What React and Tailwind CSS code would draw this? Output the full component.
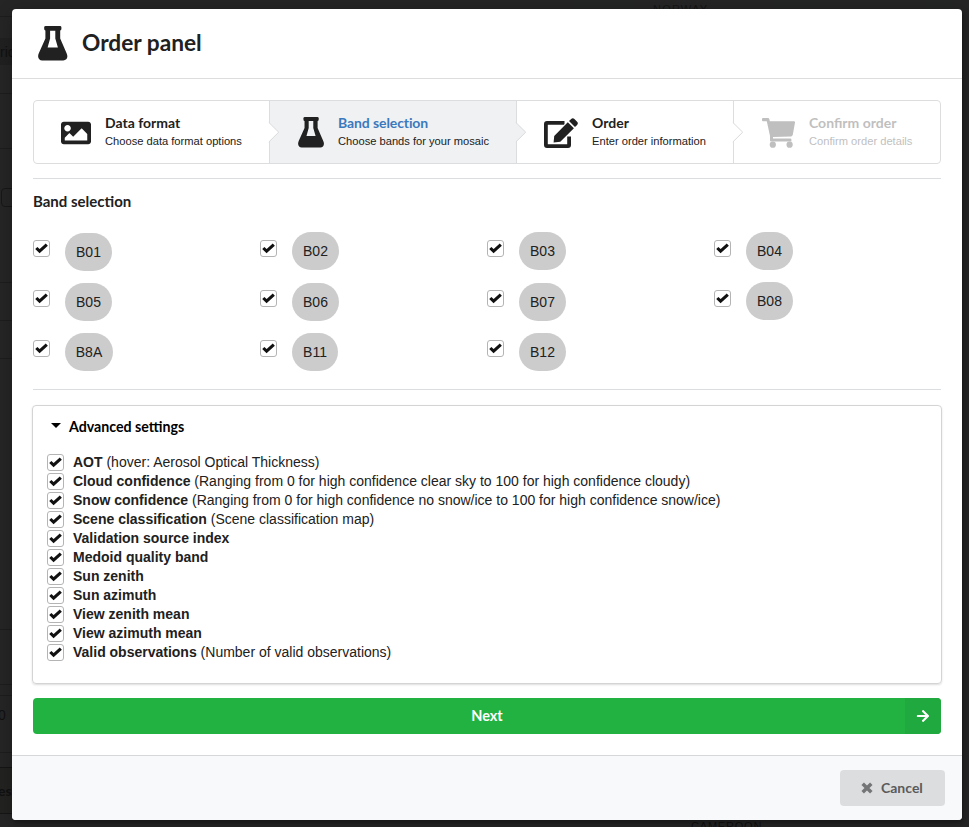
import React from "react";
import { FaImage, FaArrowRight } from "react-icons/fa";

const bands = [
  ["B01", "mt-px w-[47px]"], ["B02", "w-[47px]"], ["B03", "w-[47px]"], ["B04", "w-[47px]"],
  ["B05", "mt-px w-[47px]"], ["B06", "mt-px w-[47px]"], ["B07", "mt-px w-[47px]"], ["B08", "w-[47px]"],
  ["B8A", "mt-px w-12"], ["B11", "mt-px w-[46px]"], ["B12", "mt-px w-[47px]"],
];

const settings = [
  ["AOT", "(hover: Aerosol Optical Thickness)"],
  ["Cloud confidence", "(Ranging from 0 for high confidence clear sky to 100 for high confidence cloudy)"],
  ["Snow confidence", "(Ranging from 0 for high confidence no snow/ice to 100 for high confidence snow/ice)"],
  ["Scene classification", "(Scene classification map)"],
  ["Validation source index"],
  ["Medoid quality band"],
  ["Sun zenith"],
  ["Sun azimuth"],
  ["View zenith mean"],
  ["View azimuth mean"],
  ["Valid observations", "(Number of valid observations)"],
];

function Flask({ className }) {
  return (
    <svg viewBox="0 0 30 35" fill="currentColor" className={className}>
      <rect x="6.2" y="0" width="17.2" height="4.4" rx="1.4" />
      <path
        fillRule="evenodd"
        d="M7.4 3V12.5L0.8 27.2C-1 31.5 1 34.5 4.2 34.5H25.3C28.7 34.5 30.5 31.3 28.6 27.2L22.2 12.5V3ZM12.1 4.4H17.3V12.5L19.9 21.4H9.6L12.1 12.5Z"
      />
    </svg>
  );
}

function EditIcon({ className }) {
  return (
    <svg viewBox="0 0 34 30" className={className}>
      <path
        d="M20.5 4.9H3Q1.9 4.9 1.9 6V27Q1.9 28.1 3 28.1H24Q25.1 28.1 25.1 27V18.5"
        fill="none" stroke="currentColor" strokeWidth="3.8"
      />
      <path
        d="M9.6 24.4L10.2 18L23.8 4.2L29.9 10.3L16.3 23.8ZM25 3L27.2 0.9Q28.8-0.6 30.4 0.9L33.1 3.7Q34.6 5.3 33.1 6.9L31 9.1Z"
        fill="currentColor" stroke="#fff" strokeWidth="1.6" paintOrder="stroke"
      />
    </svg>
  );
}

function CartIcon({ className }) {
  return (
    <svg viewBox="0 0 33 30" fill="currentColor" className={className}>
      <path d="M1 0H6Q7 0 7.3 1L7.8 3.3H32Q33.1 3.3 33 4.4L30.8 16.8Q30.5 18.2 29.2 18.4L11 18.9V20.4H28.2Q29.4 20.4 29.4 21.6V23.5H9Q8 23.5 8 22.4V18L4.8 3.3H1Q0 3.3 0 2.3V1Q0 0 1 0Z" />
      <circle cx="10.8" cy="26.7" r="3.1" />
      <circle cx="27.6" cy="26.7" r="3.1" />
    </svg>
  );
}

function Checkbox() {
  return (
    <span className="block h-[17px] w-[17px] shrink-0 rounded-[3px] border border-[#b4b4b5] bg-white">
      <svg viewBox="0 0 15 15" className="block h-[15px] w-[15px]">
        <path d="M2.3 7L5.6 10.2L12.8 3.6" fill="none" stroke="#111" strokeWidth="3.1" />
      </svg>
    </span>
  );
}

function Arrow({ fill }) {
  return (
    <svg viewBox="0 0 12 22" className="absolute -right-[11px] top-1/2 z-10 h-[22px] w-3 -translate-y-1/2">
      <path d="M0 1.6L1 1.6L10.7 11.2L1 20.8L0 20.8Z" fill={fill} />
      <path d="M0.8 1.4L10.7 11.2L0.8 21" fill="none" stroke="#d8d9da" />
    </svg>
  );
}

function Step({ className, icon, title, text, titleClass = "", fill }) {
  return (
    <div className={"relative flex h-full items-center " + className}>
      {icon}
      <div>
        <div className={"h-[18px] whitespace-nowrap font-['Lato'] text-[14px] font-bold leading-[18px] " + titleClass}>{title}</div>
        <div className="mb-px mt-px whitespace-nowrap text-[11.15px] leading-4">{text}</div>
      </div>
      {fill && <Arrow fill={fill} />}
    </div>
  );
}

function Backdrop() {
  return (
    <div className="absolute inset-0 overflow-hidden text-[#111]">
      <div className="absolute left-0 top-4 h-px w-3 bg-[#1d1d1d]" />
      <div className="absolute left-0 top-[38px] h-[27px] w-3 bg-[#202020]" />
      <span className="absolute left-0 top-[42px] text-[14px] leading-5">ric</span>
      <div className="absolute left-0 top-[93px] h-px w-3 bg-[#1d1d1d]" />
      <div className="absolute left-0 top-[148px] h-px w-3 bg-[#1d1d1d]" />
      <div className="absolute left-px top-[188px] h-[19px] w-5 rounded border border-[#171717]" />
      <div className="absolute left-0 top-[282px] h-px w-3 bg-[#1d1d1d]" />
      <div className="absolute left-0 top-[320px] h-px w-3 bg-[#1d1d1d]" />
      <div className="absolute left-0 top-[358px] h-px w-3 bg-[#1d1d1d]" />
      <div className="absolute left-0 top-[629px] h-px w-3 bg-[#1d1d1d]" />
      <div className="absolute left-0 top-[684px] h-px w-3 bg-[#1d1d1d]" />
      <div className="absolute left-0 top-[695px] h-px w-3 bg-[#1d1d1d]" />
      <span className="absolute -left-0.5 top-[705px] text-[14px] leading-5">0</span>
      <div className="absolute left-0 top-[752px] h-px w-3 bg-[#1d1d1d]" />
      <div className="absolute left-0 top-[767px] h-[47px] w-3 border-y border-[#151515] bg-[#222220]" />
      <span className="absolute -left-0.5 top-[781px] font-['Lato'] text-[14px] font-bold leading-5">es</span>
      <div className="absolute left-[574px] top-0 h-2.5 w-[60px] bg-[#232625]" />
      <div className="absolute left-[774px] top-0 h-2.5 w-[46px] bg-[#232625]" />
      <div className="absolute left-[926px] top-0 h-2.5 w-[26px] bg-[#232625]" />
      <span className="absolute left-[653px] top-1 text-[11px] leading-[11px] tracking-[1.2px] text-[#151515]">NORWAY</span>
      <span className="absolute left-[691px] top-[821px] text-[11px] leading-[11px] tracking-[0.8px] text-[#111]">CAMEROON</span>
    </div>
  );
}

export default function App() {
  return (
    <div className="relative h-[827px] w-[969px] overflow-hidden bg-[#252525] pl-3 pt-[9px] font-['Liberation_Sans',sans-serif] text-[#212121]">
      <Backdrop />
      <div className="relative flex h-[811px] w-[950px] flex-col overflow-hidden rounded bg-white shadow-[1px_3px_3px_0px_rgba(0,0,0,0.2),1px_3px_15px_2px_rgba(0,0,0,0.2)]">
        <header className="flex h-[70px] shrink-0 items-start border-b border-[#dcddde] pl-[26px] pt-[17px]">
          <Flask className="h-[35px] w-[30px]" />
          <h1 className="ml-[14px] mt-[3px] font-['Lato'] text-[22.7px] font-bold leading-7">Order panel</h1>
        </header>

        <main className="flex grow flex-col px-[21px] pt-[21px]">
          <div className="flex h-16 shrink-0 rounded border border-[#dcddde]">
            <Step className="w-[235px] pl-[27px]" fill="#fff"
              icon={<FaImage className="mr-[14px] mt-px h-[30px] w-[30px]" />}
              title="Data format" text="Choose data format options" />
            <Step className="w-[248px] border-x border-[#dcddde] bg-[#f0f1f3] pl-[27.5px]" fill="#f0f1f3"
              icon={<Flask className="mr-[14px] mt-px h-[31px] w-[26.5px]" />}
              title="Band selection" text="Choose bands for your mosaic" titleClass="text-[#3b79bd] tracking-[-0.1px]" />
            <Step className="w-[217px] border-r border-[#dcddde] pl-[27px]" fill="#fff"
              icon={<EditIcon className="mr-[14px] mt-px h-[30px] w-[34px]" />}
              title="Order" text="Enter order information" />
            <Step className="grow pl-[28px] text-[#bfbfbf]"
              icon={<CartIcon className="mr-[14px] mt-px h-[30px] w-[33px]" />}
              title="Confirm order" text="Confirm order details" />
          </div>

          <section className="mt-[14px] h-[211px] shrink-0 border-t border-[#dcddde]">
            <h2 className="mt-3 font-['Lato'] text-[15px] font-bold leading-5">Band selection</h2>
            <div className="mt-[21px] grid grid-cols-4 auto-rows-[50px]">
              {bands.map(([name, cls]) => (
                <div key={name} className="flex items-start">
                  <div className="mr-[15px] mt-2"><Checkbox /></div>
                  <span className={"flex h-[38px] items-center justify-center rounded-[20px] bg-[#cccccc] text-[14px] " + cls}>{name}</span>
                </div>
              ))}
            </div>
          </section>

          <div className="h-px shrink-0 bg-[#dcddde]" />

          <section className="-mx-px mt-[15px] h-[279px] shrink-0 rounded border border-[#d4d4d5] pl-[14px] shadow-[0_1px_2px_0_rgba(34,36,38,0.15)]">
            <h3 className="mt-3 flex h-[18px] items-center font-['Lato'] text-[14.2px] font-bold leading-[18px] text-black">
              <span className="mb-1 ml-1 mr-2 border-x-[5px] border-t-[5px] border-x-transparent border-t-black" />
              Advanced settings
            </h3>
            <ul className="mt-[17px]">
              {settings.map(([name, note]) => (
                <li key={name} className="flex h-[19px] items-start">
                  <div className="mt-px"><Checkbox /></div>
                  <p className="ml-[9px] whitespace-nowrap text-[14px] leading-[18px]"><b>{name}</b>{note && " " + note}</p>
                </li>
              ))}
            </ul>
          </section>

          <button className="mt-[14px] flex h-9 shrink-0 items-center overflow-hidden rounded bg-[#21b241] text-white">
            <span className="grow pl-9 text-center font-['Lato'] text-[14.5px] font-bold leading-5">Next</span>
            <span className="flex h-full w-9 items-center justify-center bg-[#20a93e]"><FaArrowRight className="h-[14px] w-[14px]" /></span>
          </button>
        </main>

        <footer className="flex h-[65px] shrink-0 items-start justify-end border-t border-[#d6d7d8] bg-[#f8f9fb] pr-[17px] pt-[14px]">
          <button className="flex h-9 w-[105px] items-center rounded bg-[#dcddde] pl-[21px] font-['Lato'] text-[14px] font-bold text-[#5a5a5b]">
            <svg viewBox="0 0 12 12" className="mr-2 h-3 w-3">
              <path d="M1.7 1.7L10.3 10.3M10.3 1.7L1.7 10.3" stroke="#747576" strokeWidth="3.5" />
            </svg>
            <span className="pb-0.5">Cancel</span>
          </button>
        </footer>
      </div>
    </div>
  );
}
